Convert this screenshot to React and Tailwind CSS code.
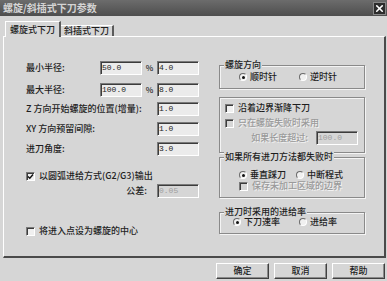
import { X } from 'lucide-react';

const sunken = 'border border-t-[#7a7a7a] border-l-[#7a7a7a] border-b-white border-r-white shadow-[inset_1px_1px_0_#3c3c3c]';
const groupBox = 'border border-[#8a8a8a] shadow-[inset_1px_1px_0_#f4f4f4,1px_1px_0_#f4f4f4]';
const disabledText = 'text-[#9a9a9a] [text-shadow:1px_1px_0_#f2f2f2]';

export default function App() {
  return (
    <div className="w-[387px] h-[281px] bg-[#d6d6d6] flex flex-col overflow-hidden font-['Noto_Sans_CJK_SC',sans-serif] text-[9px] leading-[10px] font-medium text-[#1e1e1e]">

      {/* Title bar */}
      <div className="h-[16px] shrink-0 bg-gradient-to-b from-[#6c6c6c] to-[#4e4e4e] flex items-center justify-between pl-[3px] pr-[1px]">
        <span className="text-[10px] font-bold leading-none text-[#d4d4d4]">螺旋/斜插式下刀参数</span>
        <div className="w-[13px] h-[13px] bg-[#2c2c2c] border border-[#888] flex items-center justify-center">
          <X size={11} strokeWidth={3.5} color="#fff" />
        </div>
      </div>

      {/* Tabs */}
      <div className="h-[20px] shrink-0 flex items-end pl-[5px]">
        <div className="relative z-10 -mb-px h-[16px] px-[4px] bg-[#d6d6d6] border-t border-l border-white border-r-2 border-r-[#5a5a5a] flex items-center">
          螺旋式下刀
        </div>
        <div className="h-[11px] px-[3px] border-t border-white border-r-2 border-r-[#5a5a5a] flex items-center">
          斜插式下刀
        </div>
      </div>

      {/* Panel */}
      <div className="ml-[3px] w-[383px] h-[222px] shrink-0 border-t border-l border-white border-r-2 border-b-2 border-r-[#4a4a4a] border-b-[#4a4a4a] flex">

        {/* Left column */}
        <div className="w-[215px] pl-[22px] pt-[24px] flex flex-col">
          <div className="h-[14px] flex items-center">
            <span className="w-[74px]">最小半径:</span>
            <Input value="50.0" />
            <span className="w-[15px] text-center text-[8px]">%</span>
            <Input value="4.0" />
          </div>
          <div className="mt-[8px] h-[14px] flex items-center">
            <span className="w-[74px]">最大半径:</span>
            <Input value="100.0" />
            <span className="w-[15px] text-center text-[8px]">%</span>
            <Input value="8.0" />
          </div>
          <div className="mt-[5px] h-[14px] flex items-center">
            <span className="w-[131px]">Z 方向开始螺旋的位置(增量):</span>
            <Input value="1.0" />
          </div>
          <div className="mt-[6px] h-[14px] flex items-center">
            <span className="w-[131px]">XY 方向预留间隙:</span>
            <Input value="1.0" />
          </div>
          <div className="mt-[6px] h-[14px] flex items-center">
            <span className="w-[131px]">进刀角度:</span>
            <Input value="3.0" />
          </div>

          <div className="mt-[14px] h-[12px] flex items-center gap-[4px]">
            <Check checked />
            <span>以圆弧进给方式(G2/G3)输出</span>
          </div>
          <div className="mt-[2px] h-[14px] flex items-center">
            <span className="w-[131px] text-right pr-[10px]">公差:</span>
            <Input value="0.05" disabled />
          </div>

          <div className="mt-[27px] h-[12px] flex items-center gap-[4px]">
            <Check />
            <span>将进入点设为螺旋的中心</span>
          </div>
        </div>

        {/* Right column */}
        <div className="w-[146px] pt-[28px] flex flex-col">
          <div className={`h-[24px] ${groupBox}`}>
            <GroupTitle>螺旋方向</GroupTitle>
            <div className="mt-[2px] h-[10px] pl-[19px] flex items-center">
              <Radio label="顺时针" checked w="w-[60px]" />
              <Radio label="逆时针" />
            </div>
          </div>

          <div className={`mt-[8px] h-[56px] ${groupBox} pt-[5px] pl-[5px] flex flex-col`}>
            <div className="h-[10px] flex items-center gap-[4px]">
              <Check />
              <span>沿着边界渐降下刀</span>
            </div>
            <div className="mt-[5px] h-[10px] flex items-center gap-[4px]">
              <Check disabled />
              <span className={disabledText}>只在螺旋失败时采用</span>
            </div>
            <div className="mt-[3px] h-[13px] flex items-center justify-end pr-[6px] gap-[8px]">
              <span className={disabledText}>如果长度超过:</span>
              <Input value="100.0" disabled />
            </div>
          </div>

          <div className={`mt-[4px] h-[41px] ${groupBox}`}>
            <GroupTitle>如果所有进刀方法都失败时</GroupTitle>
            <div className="mt-[8px] h-[10px] pl-[19px] flex items-center">
              <Radio label="垂直踩刀" checked w="w-[57px]" />
              <Radio label="中断程式" />
            </div>
            <div className="mt-[1px] h-[10px] pl-[19px] flex items-center gap-[4px]">
              <Check disabled />
              <span className={disabledText}>保存未加工区域的边界</span>
            </div>
          </div>

          <div className={`mt-[14px] h-[22px] ${groupBox}`}>
            <GroupTitle>进刀时采用的进给率</GroupTitle>
            <div className="h-[10px] pl-[13px] flex items-center">
              <Radio label="下刀速率" checked w="w-[66px]" />
              <Radio label="进给率" />
            </div>
          </div>
        </div>
      </div>

      {/* Buttons */}
      <div className="flex justify-end gap-[5px] pr-[2px] pt-[5px]">
        <Button>确定</Button>
        <Button>取消</Button>
        <Button>帮助</Button>
      </div>
    </div>
  );
}

function GroupTitle({ children }) {
  return (
    <span className="block w-fit -mt-[6px] ml-[4px] px-[1px] h-[10px] bg-[#d6d6d6]">
      {children}
    </span>
  );
}

function Input({ value, disabled }) {
  return (
    <div className={`w-[42px] h-[14px] ${sunken} ${disabled ? 'bg-[#d6d6d6] text-[#a0a0a0]' : 'bg-[#ebebeb]'} flex items-center pl-[1px] font-['Liberation_Mono',monospace] font-normal text-[8px] leading-none`}>
      {value}
    </div>
  );
}

function Check({ checked, disabled }) {
  return (
    <span className={`w-[9px] h-[9px] shrink-0 ${sunken} ${disabled ? 'bg-[#d6d6d6]' : 'bg-[#f0f0f0]'} flex items-center justify-center`}>
      {checked && (
        <svg width="7" height="7" viewBox="0 0 7 7">
          <path d="M1 3.5 L2.8 5.3 L6 1.5" fill="none" stroke="#111" strokeWidth="1.4" />
        </svg>
      )}
    </span>
  );
}

function Radio({ label, checked, w = '' }) {
  return (
    <div className={`${w} flex items-center gap-[3px]`}>
      <span className="w-[8px] h-[8px] shrink-0 rounded-full border border-t-[#6a6a6a] border-l-[#6a6a6a] border-b-white border-r-white bg-[#f0f0f0] flex items-center justify-center">
        {checked && <span className="w-[3px] h-[3px] rounded-full bg-[#111]" />}
      </span>
      <span>{label}</span>
    </div>
  );
}

function Button({ children }) {
  return (
    <div className="w-[53px] h-[16px] border border-t-white border-l-white border-b-[#404040] border-r-[#404040] shadow-[inset_-1px_-1px_0_#8a8a8a] flex items-center justify-center">
      {children}
    </div>
  );
}
